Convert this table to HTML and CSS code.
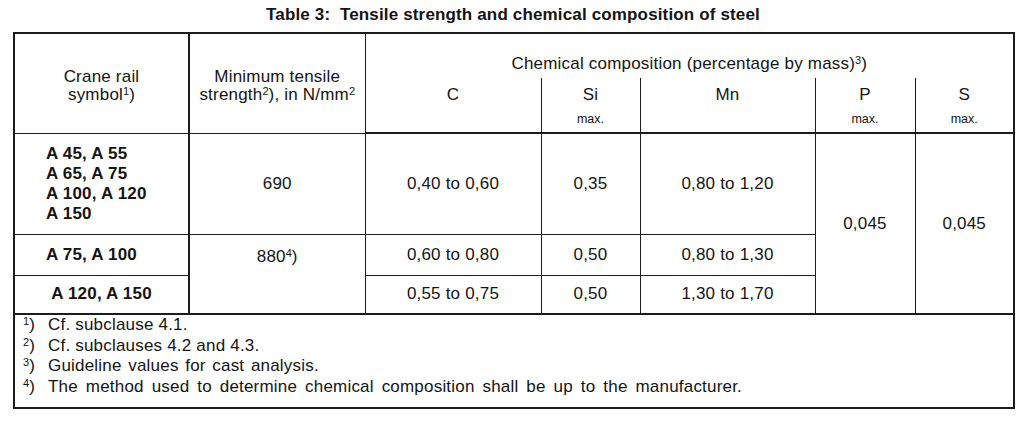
FILE: index.html
```html
<!DOCTYPE html>
<html lang="en">
<head>
<meta charset="utf-8">
<title>Table 3</title>
<link rel="stylesheet" href="styles.css">
</head>
<body>
<div class="page">
  <h1 class="title">Table 3:&nbsp; Tensile strength and chemical composition of steel</h1>
  <table class="steel">
    <colgroup>
      <col class="c-sym"><col class="c-ten"><col class="c-c"><col class="c-si"><col class="c-mn"><col class="c-p"><col class="c-s">
    </colgroup>
    <thead>
      <tr class="h1">
        <th rowspan="2" class="hcell sym-h">Crane rail<br>symbol<span class="sup">1</span>)</th>
        <th rowspan="2" class="hcell ten-h">Minimum tensile<br>strength<span class="sup">2</span>), in N/mm<span class="sup">2</span></th>
        <th colspan="5" class="chem-h">Chemical composition (percentage by mass)<span class="sup">3</span>)</th>
      </tr>
      <tr class="h2">
        <th class="sub">C</th>
        <th class="sub">Si<span class="max">max.</span></th>
        <th class="sub">Mn</th>
        <th class="sub">P<span class="max">max.</span></th>
        <th class="sub last">S<span class="max">max.</span></th>
      </tr>
    </thead>
    <tbody>
      <tr class="r1">
        <td class="sym left">A 45, A 55<br>A 65, A 75<br>A 100, A 120<br>A 150</td>
        <td>690</td>
        <td>0,40 to 0,60</td>
        <td>0,35</td>
        <td>0,80 to 1,20</td>
        <td rowspan="3">0,045</td>
        <td rowspan="3" class="last">0,045</td>
      </tr>
      <tr class="r2">
        <td class="sym left">A 75, A 100</td>
        <td rowspan="2" class="t880">880<span class="sup">4</span>)</td>
        <td>0,60 to 0,80</td>
        <td>0,50</td>
        <td>0,80 to 1,30</td>
      </tr>
      <tr class="r3">
        <td class="sym">A 120, A 150</td>
        <td>0,55 to 0,75</td>
        <td>0,50</td>
        <td>1,30 to 1,70</td>
      </tr>
      <tr class="notes">
        <td colspan="7" class="notecell">
          <div class="note"><span class="mark"><span class="sup">1</span>)</span><span>Cf. subclause 4.1.</span></div>
          <div class="note"><span class="mark"><span class="sup">2</span>)</span><span>Cf. subclauses 4.2 and 4.3.</span></div>
          <div class="note note-3"><span class="mark"><span class="sup">3</span>)</span><span>Guideline values for cast analysis.</span></div>
          <div class="note note-4"><span class="mark"><span class="sup">4</span>)</span><span>The method used to determine chemical composition shall be up to the manufacturer.</span></div>
        </td>
      </tr>
    </tbody>
  </table>
</div>
</body>
</html>
```
FILE: styles.css
```css
html, body {
  margin: 0;
  padding: 0;
  background: #ffffff;
}
body {
  font-family: "Liberation Sans", Arial, Helvetica, sans-serif;
  color: #141414;
  font-size: 17px;
  letter-spacing: 0.2px;
}
.page {
  width: 1024px;
  height: 428px;
  padding: 0 0 0 13px;
  box-sizing: border-box;
}
.title {
  width: 1000px;
  margin: 0;
  padding-top: 4px;
  height: 28px;
  line-height: 22px;
  font-size: 17px;
  font-weight: bold;
  text-align: center;
  letter-spacing: 0.15px;
}
.steel {
  width: 1000px;
  border-collapse: collapse;
  table-layout: fixed;
  border: 2px solid #1c1c1c;
}
.c-sym { width: 175px; }
.c-ten { width: 176px; }
.c-c { width: 176px; }
.c-si { width: 99px; }
.c-mn { width: 175px; }
.c-p { width: 100px; }
.c-s { width: 99px; }

th, td {
  padding: 0;
  font-weight: normal;
  text-align: center;
  vertical-align: middle;
  border-left: 1px solid #1c1c1c;
  border-top: 1px solid #1c1c1c;
  line-height: 20px;
}
.h1 { height: 45px; }
.h2 { height: 55px; }
.hcell { line-height: 18px; padding-top: 5px; }
.sym-h { border-right: 2px solid #1c1c1c; }
.chem-h {
  vertical-align: bottom;
  padding-bottom: 4px;
  border-bottom: none;
}
.sub {
  border-top: none;
  vertical-align: top;
  padding-top: 7px;
  line-height: 20px;
}
.max {
  display: block;
  font-size: 12.5px;
  line-height: 14px;
  margin-top: 7px;
  letter-spacing: 0;
}
thead tr.h2 th { border-bottom: 2px solid #1c1c1c; }

tbody td:first-child { border-right: 2px solid #1c1c1c; }
.r1 { height: 101px; }
.r2 { height: 41px; }
.r3 { height: 39px; }
.sym { font-weight: bold; }
.sym.left { text-align: left; padding-left: 31px; }
.t880 { vertical-align: top; padding-top: 12px; }

.sup {
  font-size: 11px;
  vertical-align: 5px;
  line-height: 0;
  letter-spacing: 0;
}

.notes { height: 91px; }
.notecell {
  border-top: 2px solid #1c1c1c;
  text-align: left;
  vertical-align: top;
  padding: 0 0 10px 8px;
}
.note {
  display: flex;
  line-height: 20.5px;
}
.note-3 { word-spacing: 1.7px; }
.note-4 { word-spacing: 3px; }
.mark {
  width: 25px;
  flex: none;
}
```
